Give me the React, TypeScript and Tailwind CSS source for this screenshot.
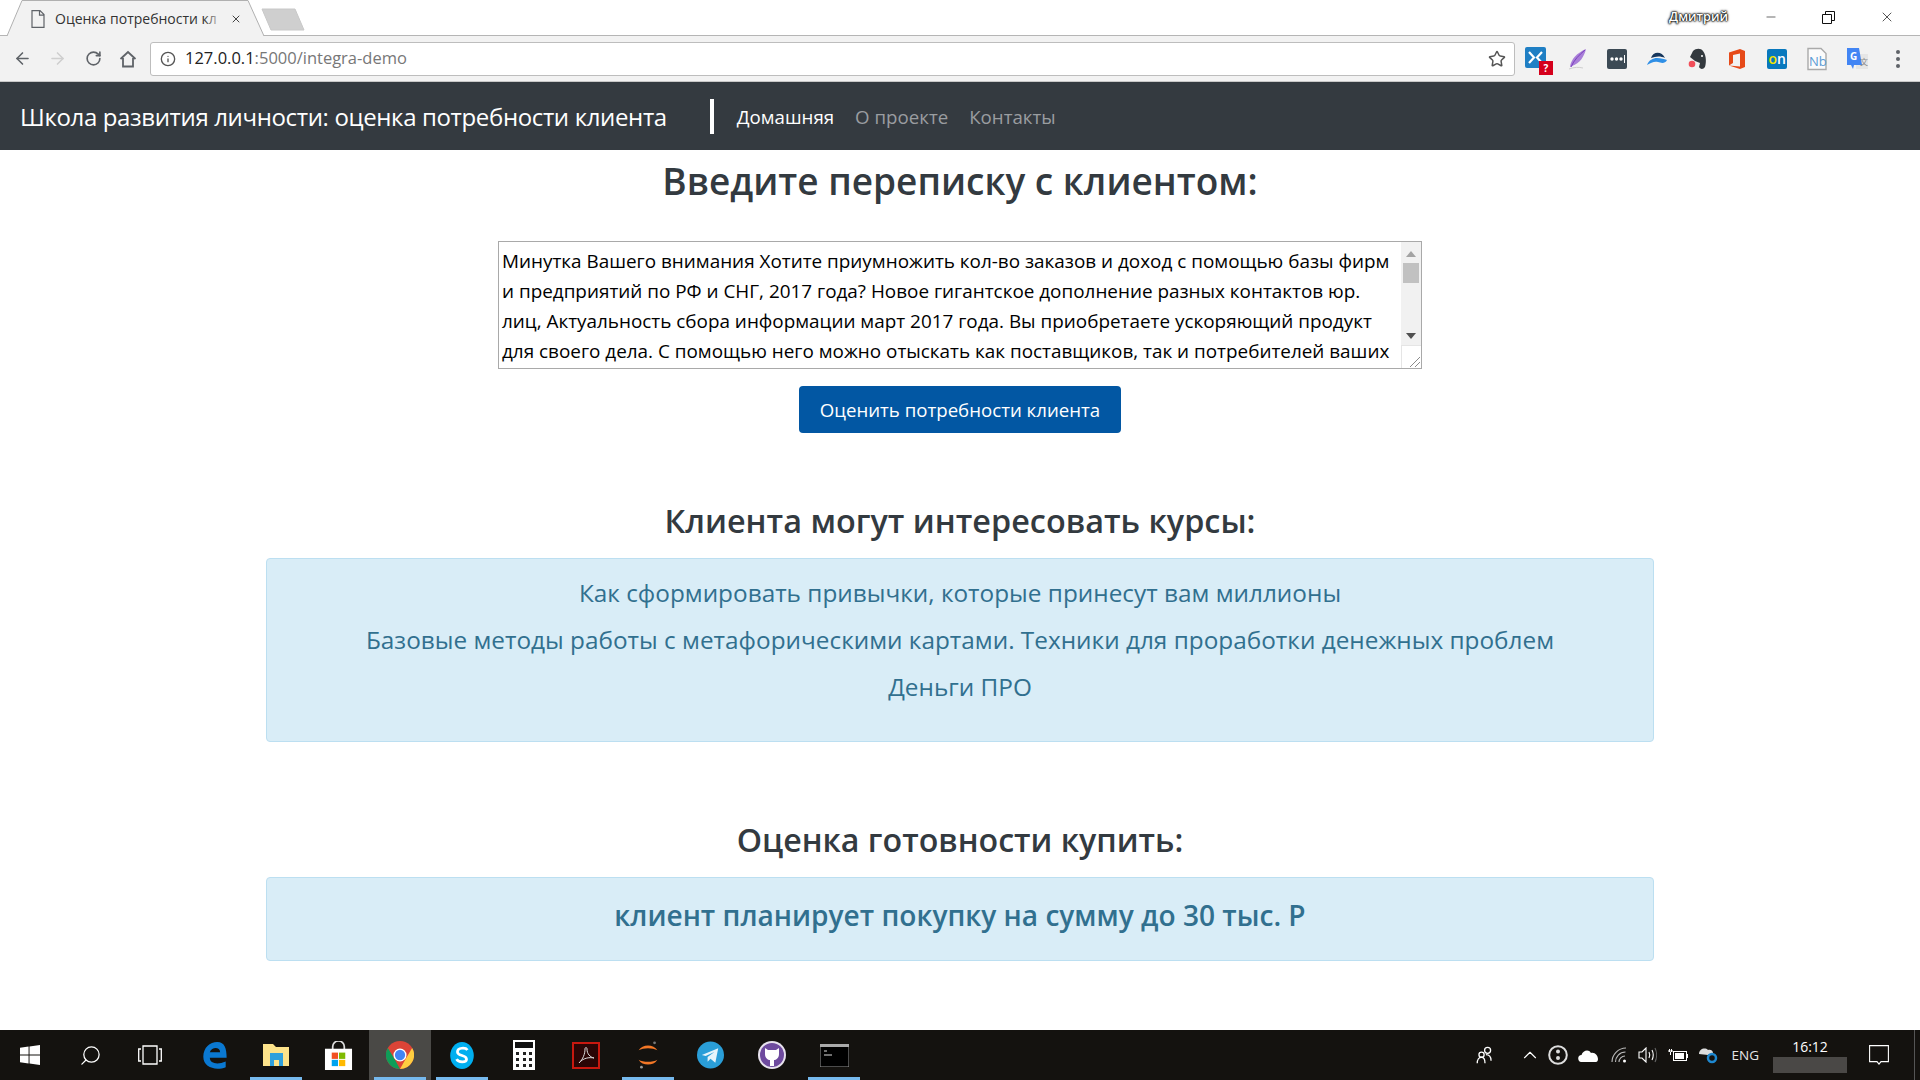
import React from "react";
import { ArrowLeft, ArrowRight, RotateCw, Info, Star, X, Minus, Search, ChevronUp } from "lucide-react";

const FileIcon = () => (
  <svg width="14" height="18" viewBox="0 0 14 18" fill="none" stroke="#5f6368" strokeWidth="1.2">
    <path d="M1 .6h8l4 4v12.800H1zM8.500 .6v4.500H13" />
  </svg>
);

const Extensions = () => (
  <div className="flex items-center gap-[16px] ml-[10px]">
    <div className="relative w-[24px] h-[24px]">
      <svg width="21" height="21" viewBox="0 0 21 21">
        <rect width="21" height="21" rx="2" fill="#1f7fc4" />
        <path d="M4 5l5 5.500-5 5.500M17 5l-5 5.500 5 5.500" stroke="#fff" strokeWidth="2.200" fill="none" />
      </svg>
      <span className="absolute left-[14px] top-[14px] w-[14px] h-[14px] bg-[#d5001c] text-white text-[10px] leading-[14px] font-bold text-center">?</span>
    </div>
    <svg width="24" height="24" viewBox="0 0 24 24">
      <path d="M5 20C6 12 12 6 21 2c-2 8-6 14-14 17z" fill="#a97fd8" />
      <path d="M6 20C9 13 14 8 20 3" stroke="#7b3fc0" fill="none" />
      <path d="M4 22c5-2 10-2 14-1" stroke="#cfcfcf" fill="none" />
    </svg>
    <svg width="24" height="24" viewBox="0 0 24 24">
      <rect x="2" y="2" width="20" height="20" rx="2" fill="#3c4a55" />
      <circle cx="7" cy="12" r="1.700" fill="#fff" />
      <circle cx="11.500" cy="12" r="1.700" fill="#fff" />
      <circle cx="16" cy="12" r="1.700" fill="#fff" />
      <rect x="19" y="8" width="1" height="8" fill="#fff" />
    </svg>
    <svg width="24" height="24" viewBox="0 0 24 24">
      <path d="M2 18c2-5 6-7 10-7 4 0 7 1 10 2-2 4-6 3-9 2-4-1-7 1-11 3z" fill="#2f8fe6" />
      <path d="M6 11c2-7 11-7 14 0-4-2-9-2-14 0z" fill="#16365c" />
    </svg>
    <svg width="24" height="24" viewBox="0 0 24 24">
      <path d="M8 4c3-3 8-3 10 0 4 5 3 13 2 16-2 3-5 2-6 0l1-4-5-2-5-4z" fill="#33393e" />
      <circle cx="17" cy="9" r="1" fill="#fff" />
      <circle cx="7" cy="17" r="3.300" fill="#f24f5a" />
    </svg>
    <svg width="24" height="24" viewBox="0 0 24 24">
      <path d="M4 5.500L15 2l5 2v16l-5 2-11-3.500 11 1V6.500L8 8v8l-4 2.500z" fill="#e64a19" />
    </svg>
    <svg width="24" height="24" viewBox="0 0 24 24">
      <rect x="2" y="2" width="20" height="20" rx="2" fill="#0878bd" />
      <text x="3.500" y="17" fontFamily="Open Sans" fontSize="14" fontWeight="600" fill="#f5e600">o</text>
      <text x="12" y="17" fontFamily="Open Sans" fontSize="14" fontWeight="600" fill="#fff">n</text>
    </svg>
    <svg width="24" height="24" viewBox="0 0 24 24">
      <path d="M3 1.500h13l5 5v16H3z" fill="#fbfbfb" stroke="#aaa" strokeWidth="1.400" />
      <text x="4" y="19" fontFamily="Open Sans" fontSize="13" fill="#5b9bd5">Nb</text>
    </svg>
    <svg width="24" height="24" viewBox="0 0 24 24">
      <rect x="11" y="7" width="12" height="15" fill="#e6e6e6" />
      <path d="M2 1h12l3 17H9l-1 4-2-4H2z" fill="#4285f4" />
      <text x="5" y="13" fontFamily="Open Sans" fontSize="10" fontWeight="700" fill="#fff">G</text>
      <text x="15" y="18" fontFamily="Noto Sans CJK SC" fontSize="8" fill="#888">文</text>
    </svg>
  </div>
);

const Dots = () => (
  <div className="flex flex-col gap-[3px] ml-[27px] mr-[20px]">
    <span className="w-[4px] h-[4px] rounded-full bg-[#5f6368]" />
    <span className="w-[4px] h-[4px] rounded-full bg-[#5f6368]" />
    <span className="w-[4px] h-[4px] rounded-full bg-[#5f6368]" />
  </div>
);

const BrowserChrome = () => (
  <div className="font-['Open_Sans',sans-serif]">
    <div className="h-[36px] bg-white flex items-end border-b border-[#b5b5b5] relative">
      <div className="relative w-[270px] h-[35px]">
        <svg className="absolute left-0 top-0" width="270" height="36" viewBox="0 0 270 36">
          <path d="M7 36L22 .5h226L264 36" fill="#f2f2f2" stroke="#b0b0b0" />
        </svg>
        <div className="absolute left-[31px] top-[10px]"><FileIcon /></div>
        <span className="absolute left-[55px] top-[10px] w-[168px] overflow-hidden whitespace-nowrap text-[14px] leading-[18px] text-[#333]">Оценка потребности кл</span>
        <span className="absolute left-[205px] top-[10px] w-[18px] h-[18px] bg-gradient-to-r from-transparent to-[#f2f2f2]" />
        <X className="absolute left-[230px] top-[13px] text-[#444]" size={12} />
      </div>
      <svg className="absolute left-[261px] top-[8px]" width="44" height="23" viewBox="0 0 44 23">
        <path d="M1 1h33l9 21H10z" fill="#cfcfcf" stroke="#c8c8c8" />
      </svg>
      <div className="ml-auto mb-[10px] flex items-center">
        <span className="text-[12.6px] leading-[16px] font-semibold text-white mr-[36px] [text-shadow:0_0_1px_#000,0_0_2px_#000,0_0_2px_#000,0_0_3px_#333]">Дмитрий</span>
        <Minus size={14} strokeWidth={1} className="text-black mr-[44px]" />
        <svg className="mr-[44px]" width="13" height="13" viewBox="0 0 13 13" fill="none" stroke="#111">
          <path d="M.5 3.500h9v9h-9zM3.500 3.500v-3h9v9h-3" />
        </svg>
        <X size={16} strokeWidth={1} className="text-black mr-[25px]" />
      </div>
    </div>
    <div className="h-[46px] bg-[#f2f2f2] flex items-center border-b border-[#c8c8c8]">
      <ArrowLeft size={19} className="ml-[13px] text-[#5f6368]" />
      <ArrowRight size={19} className="ml-[16px] text-[#cfcfcf]" />
      <RotateCw size={17} strokeWidth={2.3} className="ml-[18px] text-[#5f6368]" />
      <svg className="ml-[17px]" width="18" height="18" viewBox="0 0 18 18" fill="none" stroke="#5f6368" strokeWidth="1.800">
        <path d="M1.500 9L9 2l7.500 7M4 8v8.500h10V8" />
      </svg>
      <div className="ml-[13px] flex-1 h-[34px] bg-white border border-[#bdbdbd] rounded-[3px] flex items-center pl-[9px] pr-[8px]">
        <Info size={16} className="text-[#555]" />
        <span className="ml-[9px] text-[16.500px] text-[#222]">127.0.0.1<span className="text-[#777]">:5000/integra-demo</span></span>
        <Star size={18} className="ml-auto text-[#555]" />
      </div>
      <Extensions />
      <Dots />
    </div>
  </div>
);

const TextBox = () => (
  <div className="w-[924px] h-[128px] border border-[#a9a9a9] mt-[35px] flex bg-white">
    <div className="flex-1 overflow-hidden px-[3px] pt-[4px] text-[18.900px] leading-[30px] text-black whitespace-nowrap">
      <div>Минутка Вашего внимания Хотите приумножить кол-во заказов и доход с помощью базы фирм</div>
      <div>и предприятий по РФ и СНГ, 2017 года? Новое гигантское дополнение разных контактов юр.</div>
      <div>лиц, Актуальность сбора информации март 2017 года. Вы приобретаете ускоряющий продукт</div>
      <div>для своего дела. С помощью него можно отыскать как поставщиков, так и потребителей ваших</div>
    </div>
    <div className="w-[20px] bg-[#f1f1f1] flex flex-col items-center relative">
      <span className="mt-[9px] w-0 h-0 border-x-[5px] border-x-transparent border-b-[6px] border-b-[#a3a3a3]" />
      <span className="mt-[6px] w-[16px] h-[20px] bg-[#c1c1c1]" />
      <span className="mt-[50px] w-0 h-0 border-x-[5px] border-x-transparent border-t-[6px] border-t-[#505050]" />
      <div className="absolute bottom-0 left-0 w-[20px] h-[23px] bg-white border-t border-l border-[#e5e5e5]">
        <svg className="absolute right-0 bottom-0" width="12" height="12" viewBox="0 0 12 12" stroke="#8a8a8a">
          <path d="M1 11L11 1M6 11l5-5" />
        </svg>
      </div>
    </div>
  </div>
);

const TaskCell = ({ children, active, open }: { children: React.ReactNode; active?: boolean; open?: boolean }) => (
  <div className={active ? "w-[62px] h-full flex items-center justify-center relative bg-[#4a4946]" : "w-[62px] h-full flex items-center justify-center relative"}>
    {children}
    {open && <span className="absolute bottom-0 left-[5px] w-[52px] h-[3px] bg-[#76b9ed]" />}
  </div>
);

const Taskbar = () => (
  <div className="h-[50px] bg-[#14120f] flex items-center relative text-white font-['Open_Sans',sans-serif]">
    <div className="flex items-center h-full">
      <div className="w-[60px] flex justify-center">
        <svg width="20" height="20" viewBox="0 0 21 21" fill="#fff">
          <path d="M0 3l9-1.300V10H0zM10 1.500L21 0v10H10zM0 11h9v8.300L0 18zM10 11h11v10l-11-1.500z" />
        </svg>
      </div>
      <div className="w-[60px] flex justify-center">
        <Search size={23} strokeWidth={1.300} className="text-white -scale-x-100" />
      </div>
      <div className="w-[60px] flex justify-center">
        <svg width="24" height="20" viewBox="0 0 24 20" fill="none" stroke="#fff" strokeWidth="1.300">
          <path d="M5 1h14v18H5zM3 4H.7v12H3M21 4h2.300v12H21" />
        </svg>
      </div>
      <div className="w-[3px]" />
      <TaskCell>
        <svg width="27" height="28" viewBox="0 0 28 30">
          <path d="M27 18H9c0 6 8 8 17 4v6c-10 4-24 1-24-11C2 7 9 1 17 1c8 0 10 7 10 17zM9 12h11c0-6-9-6-11 0z" fill="#0a78d1" />
        </svg>
      </TaskCell>
      <TaskCell open>
        <svg width="28" height="24" viewBox="0 0 28 24">
          <path d="M1 1h10l3 3h13v19H1z" fill="#fde38a" />
          <path d="M8 10h13v13h-4v-6h-5v6H8z" fill="#2fa0dd" />
        </svg>
      </TaskCell>
      <TaskCell>
        <svg width="29" height="29" viewBox="0 0 30 30">
          <path d="M9 9V6a6 6 0 0 1 12 0v3" fill="none" stroke="#ddd" strokeWidth="1.800" />
          <rect x="1" y="8" width="28" height="22" fill="#fff" />
          <rect x="8" y="12" width="6.500" height="6.500" fill="#f25022" />
          <rect x="15.500" y="12" width="6.500" height="6.500" fill="#7fba00" />
          <rect x="8" y="19.500" width="6.500" height="6.500" fill="#00a4ef" />
          <rect x="15.500" y="19.500" width="6.500" height="6.500" fill="#ffb900" />
        </svg>
      </TaskCell>
      <TaskCell active open>
        <svg width="28" height="28" viewBox="0 0 30 30">
          <circle cx="15" cy="15" r="15" fill="#db4437" />
          <path d="M15 30A15 15 0 0 1 2 7.500L9 19z" fill="#0f9d58" />
          <path d="M28 7.500A15 15 0 0 1 15 30l6.500-11.500z" fill="#ffcd40" />
          <circle cx="15" cy="15" r="7" fill="#fff" />
          <circle cx="15" cy="15" r="5.500" fill="#4285f4" />
        </svg>
      </TaskCell>
      <TaskCell open>
        <svg width="28" height="29" viewBox="0 0 30 32">
          <ellipse cx="15" cy="16" rx="13" ry="15" fill="#00aff0" />
          <path d="M21 10c-2-3-11-3-11 2 0 5 10 3 10 8 0 4-9 4-11 0" fill="none" stroke="#fff" strokeWidth="3" />
        </svg>
      </TaskCell>
      <TaskCell>
        <svg width="22" height="30" viewBox="0 0 22 30">
          <rect width="22" height="30" fill="#fff" />
          <rect x="2" y="2" width="18" height="6" fill="#111" />
          <path d="M3 12h3v3H3zM10 12h3v3h-3zM16 12h3v3h-3zM3 18h3v3H3zM10 18h3v3h-3zM16 18h3v3h-3zM3 24h3v3H3zM10 24h3v3h-3zM16 24h3v3h-3z" fill="#222" />
        </svg>
      </TaskCell>
      <TaskCell>
        <svg width="28" height="27" viewBox="0 0 28 27">
          <rect x="1" y="1" width="26" height="25" fill="#2a0505" stroke="#c8180f" strokeWidth="2" />
          <path d="M7 21c4-4 6-9 6-14 0-2 2-2 2 0 0 5 3 8 7 9-5-1-11 0-15 5z" fill="none" stroke="#ddd" />
        </svg>
      </TaskCell>
      <TaskCell open>
        <svg width="24" height="30" viewBox="0 0 24 32">
          <path d="M2 11c4-7 16-7 20 0-5-3-15-3-20 0zM2 21c5 3 15 3 20 0-4 7-16 7-20 0z" fill="#f37726" />
          <circle cx="19" cy="3" r="1.500" fill="#777" />
          <circle cx="5" cy="29" r="1.500" fill="#999" />
        </svg>
      </TaskCell>
      <TaskCell>
        <svg width="27" height="28" viewBox="0 0 28 28">
          <circle cx="14" cy="14" r="14" fill="#2a9ed8" />
          <path d="M5 14l17-7-3 15-5-4-3 3v-5l7-5-9 4z" fill="#e8f4fa" />
        </svg>
      </TaskCell>
      <TaskCell>
        <svg width="28" height="28" viewBox="0 0 28 28">
          <circle cx="14" cy="14" r="14" fill="#e8e2ee" />
          <circle cx="14" cy="14" r="12" fill="#6e4a9e" />
          <path d="M7 7l3 2h8l3-2v6c0 4-3 6-5 6v6h-4v-6c-2 0-5-2-5-6z" fill="#fff" />
        </svg>
      </TaskCell>
      <TaskCell open>
        <svg width="29" height="23" viewBox="0 0 29 23">
          <rect width="29" height="23" fill="#000" stroke="#999" />
          <rect width="29" height="3" fill="#aaa" />
          <path d="M4 7h3M4 11h8" stroke="#ddd" />
        </svg>
      </TaskCell>
    </div>
    <div className="ml-auto flex items-center h-full">
      <svg width="18" height="19" viewBox="0 0 20 22" fill="none" stroke="#fff" strokeWidth="1.500">
        <circle cx="13" cy="5" r="3.500" />
        <circle cx="6" cy="10" r="3" />
        <path d="M1 20c0-4 2-7 5-7s4 3 4 7M11 10c4 0 6 3 6 7" />
      </svg>
      <ChevronUp size={22} strokeWidth={1.200} className="ml-[25px] -mr-[3px]" />
      <svg className="ml-[10px]" width="20" height="20" viewBox="0 0 20 20" fill="none" stroke="#ddd" strokeWidth="2">
        <circle cx="10" cy="10" r="8.800" />
        <circle cx="10" cy="6.500" r="1" fill="#ddd" />
        <circle cx="10" cy="13" r="1" fill="#ddd" />
      </svg>
      <svg className="ml-[10px]" width="20" height="13" viewBox="0 0 20 13" fill="#fff">
        <path d="M4 13a3.500 3.500 0 0 1-.5-7C5 1 11 0 13 4c4-1 7 3 7 6 0 2-1 3-2 3z" />
      </svg>
      <svg className="ml-[13px]" width="16" height="16" viewBox="0 0 16 16" fill="none" stroke="#bbb" strokeWidth="1.100">
        <path d="M1 15C1 8 7 1 15 1M4.500 15c0-5 4-10 10-10M8 15c0-3 2.500-6 6-6" />
        <circle cx="13.500" cy="14" r="1.500" fill="#fff" stroke="none" />
      </svg>
      <svg className="ml-[11px]" width="19" height="16" viewBox="0 0 19 16" fill="none" stroke="#fff" strokeWidth="1.100">
        <path d="M1 5h3l4-4v14l-4-4H1z" />
        <path d="M11 5c1 2 1 4 0 6M14 3c1.500 3 1.500 7 0 10" />
        <path d="M17 1c2 4 2 10 0 14" stroke="#666" />
      </svg>
      <svg className="ml-[11px]" width="20" height="13" viewBox="0 0 20 13">
        <rect x="5.500" y="2.500" width="13" height="9" fill="none" stroke="#fff" />
        <rect x="7" y="4" width="9" height="6" fill="#fff" />
        <path d="M19.500 5v4" stroke="#fff" />
        <path d="M0 2h5M1.500 0v3M3.500 0v3M2.500 3v3" stroke="#fff" />
      </svg>
      <svg className="ml-[11px]" width="19" height="18" viewBox="0 0 19 18">
        <path d="M0 8c0-5 6-7 9-4 3-1 5 1 5 3L9 9z" fill="#ddd" />
        <circle cx="13" cy="12" r="4" fill="none" stroke="#1e88d0" strokeWidth="2.500" />
      </svg>
      <span className="ml-[14px] text-[13.500px] text-[#e5e5e5]">ENG</span>
      <div className="ml-[14px] w-[74px] flex flex-col items-center">
        <span className="text-[14px] leading-[18px] mb-[1px]">16:12</span>
        <span className="w-[74px] h-[16px] bg-[#4a4846]" />
      </div>
      <svg className="ml-[22px] mr-[25px]" width="20" height="20" viewBox="0 0 20 20" fill="none" stroke="#fff" strokeWidth="1.100">
        <path d="M.6 .6h18.800v16H12l-2 2.500-2-2.500H.6z" />
      </svg>
      <span className="w-[6px] h-full border-l border-[#555]" />
    </div>
  </div>
);

export default function App() {
  return (
    <div className="h-screen w-full flex flex-col overflow-hidden bg-white">
      <BrowserChrome />
      <nav className="h-[68px] bg-[#343a40] flex items-center pl-[20px] font-['Open_Sans',sans-serif] shrink-0">
        <span className="pt-[2px] text-[24px] tracking-[-0.36px] text-white">Школа развития личности: оценка потребности клиента</span>
        <span className="w-[4px] h-[35px] bg-white ml-[43px]" />
        <div className="ml-[23px] pt-[2px] flex gap-[21px] text-[18.700px]">
          <a className="text-white">Домашняя</a>
          <a className="text-[#9a9da0]">О проекте</a>
          <a className="text-[#9a9da0]">Контакты</a>
        </div>
      </nav>
      <main className="flex-1 flex flex-col items-center font-['Open_Sans',sans-serif] text-[#333a40]">
        <h1 className="mt-[6px] text-[37px] leading-[50px] font-semibold">Введите переписку с клиентом:</h1>
        <TextBox />
        <button className="mt-[17px] h-[47px] w-[322px] rounded-[4px] bg-[#0257a3] text-white text-[18.650px]">Оценить потребности клиента</button>
        <h2 className="mt-[65px] text-[32.400px] leading-[44px] font-semibold">Клиента могут интересовать курсы:</h2>
        <div className="mt-[16px] w-[1388px] h-[184px] rounded-[4px] border border-[#bcdff1] bg-[#d9edf7] flex flex-col items-center pt-[10px] text-[24.350px] leading-[47px] font-medium text-[#31708f]">
          <div>Как сформировать привычки, которые принесут вам миллионы</div>
          <div>Базовые методы работы с метафорическими картами. Техники для проработки денежных проблем</div>
          <div>Деньги ПРО</div>
        </div>
        <h2 className="mt-[76px] text-[32.200px] leading-[44px] font-semibold">Оценка готовности купить:</h2>
        <div className="mt-[15px] w-[1388px] h-[84px] rounded-[4px] border border-[#bcdff1] bg-[#d9edf7] flex justify-center pt-[19px] text-[28.100px] leading-[37px] font-semibold text-[#31708f]">
          клиент планирует покупку на сумму до 30 тыс. Р
        </div>
      </main>
      <Taskbar />
    </div>
  );
}
